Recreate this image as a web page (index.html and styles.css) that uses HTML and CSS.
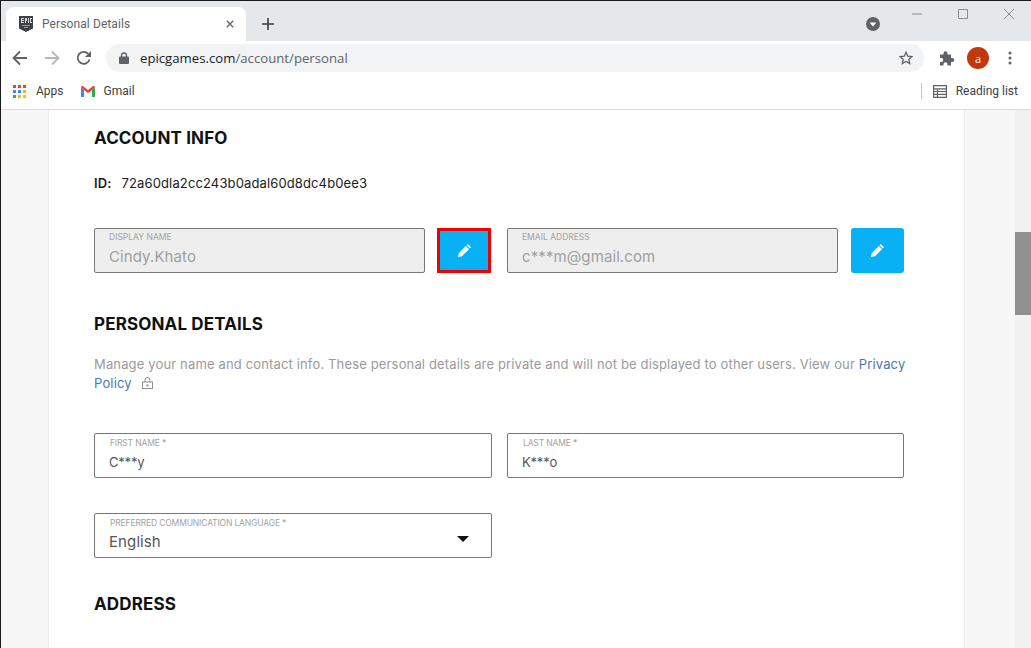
FILE: index.html
```html
<!DOCTYPE html>
<html lang="en">
<head>
<meta charset="utf-8">
<title>Personal Details</title>
<link rel="stylesheet" href="styles.css">
</head>
<body>
<div class="window">
  <div class="tabstrip">
    <div class="tab">
      <svg class="favicon" viewBox="0 0 14 16"><path d="M0 0h14v12.500L7 16 0 12.500z" fill="#3c4043"/><path d="M2 2h3v1H3v1h2v1H3v1h2v1H2zM6 2h2v3H7v2H6zM9 2h1v5H9zM11 2h2v1h-1v3h1v1h-2z" fill="#d8d8d8"/><path d="M3 9h8v1H3zM5 11h4v1H5z" fill="#9a9a9a"/></svg>
      <span class="tab-title">Personal Details</span>
      <svg class="tab-close" viewBox="0 0 10 10"><path d="M1 1l8 8M9 1l-8 8" stroke="#5f6368" stroke-width="1.600"/></svg>
    </div>
    <svg class="new-tab" viewBox="0 0 12 12"><path d="M6 0v12M0 6h12" stroke="#3c4043" stroke-width="1.600"/></svg>
    <div class="strip-spacer"></div>
    <svg class="tab-search" viewBox="0 0 14 14"><circle cx="7" cy="7" r="7" fill="#5f6368"/><path d="M3.600 5.400h6.800L7 9.400z" fill="#fff"/></svg>
    <div class="win-controls">
      <svg viewBox="0 0 10 10"><path d="M0 5h10" stroke="#8a8d91"/></svg>
      <svg viewBox="0 0 10 10"><path d="M.5.5h9v9h-9z" fill="none" stroke="#8a8d91"/></svg>
      <svg viewBox="0 0 10 10"><path d="M0 0l10 10M10 0L0 10" stroke="#8a8d91"/></svg>
    </div>
  </div>
  <div class="toolbar">
    <svg class="nav" viewBox="0 0 16 16"><path d="M15 8H2M8 1.500L1.500 8 8 14.500" fill="none" stroke="#5f6368" stroke-width="1.800"/></svg>
    <svg class="nav" viewBox="0 0 16 16"><path d="M1 8h13M8 1.500L14.500 8 8 14.500" fill="none" stroke="#b6b8bb" stroke-width="1.800"/></svg>
    <svg class="nav" viewBox="0 0 16 16"><path d="M13.500 9.500A6 6 0 1 1 12.200 3.800" fill="none" stroke="#5f6368" stroke-width="1.800"/><path d="M15 1v6H9z" fill="#5f6368"/></svg>
    <div class="omnibox">
      <svg class="lock" viewBox="0 0 10 12"><path d="M2.500 5V3.500a2.500 2.500 0 0 1 5 0V5" fill="none" stroke="#5f6368" stroke-width="1.300"/><rect y="4.500" width="10" height="7.500" rx="1" fill="#5f6368"/></svg>
      <span class="url"><span class="host">epicgames.com</span>/account/personal</span>
      <svg class="star" viewBox="0 0 16 16"><path d="M8 1.500l2 4.400 4.700.5-3.500 3.200 1 4.700L8 11.900l-4.200 2.400 1-4.700L1.300 6.400 6 5.900z" fill="none" stroke="#5f6368" stroke-width="1.500"/></svg>
    </div>
    <svg class="ext" viewBox="0 0 16 16"><path d="M1 4.500h3.500V3.300a2 2 0 1 1 4 0v1.200H12V8h1.200a2 2 0 1 1 0 4H12v3.500H8.500v-1.200a2 2 0 1 0-4 0v1.200H1V12h1.200a2 2 0 1 0 0-4H1z" fill="#5f6368"/></svg>
    <div class="avatar">a</div>
    <svg class="kebab" viewBox="0 0 4 14"><circle cx="2" cy="2" r="1.500" fill="#5f6368"/><circle cx="2" cy="7" r="1.500" fill="#5f6368"/><circle cx="2" cy="12" r="1.500" fill="#5f6368"/></svg>
  </div>
  <div class="bookmarks">
    <svg class="apps" viewBox="0 0 14 14">
      <rect width="3" height="3" fill="#ea4335"/><rect x="5" width="3" height="3" fill="#ea4335"/><rect x="10" width="3" height="3" fill="#ea4335"/>
      <rect y="5" width="3" height="3" fill="#4285f4"/><rect x="5" y="5" width="3" height="3" fill="#4285f4"/><rect x="10" y="5" width="3" height="3" fill="#fbbc04"/>
      <rect y="10" width="3" height="3" fill="#34a853"/><rect x="5" y="10" width="3" height="3" fill="#fbbc04"/><rect x="10" y="10" width="3" height="3" fill="#fbbc04"/>
    </svg>
    <span class="bm-label bm-apps">Apps</span>
    <svg class="gmail" viewBox="0 0 14 11">
      <path d="M0 1.500V11h3V4z" fill="#4285f4"/><path d="M14 1.500V11h-3V4z" fill="#34a853"/>
      <path d="M0 1.500C0 0 1.500-.400 2.500.400L7 4l4.500-3.600C12.500-.400 14 0 14 1.500L11 4 7 7 3 4z" fill="#ea4335"/>
    </svg>
    <span class="bm-label">Gmail</span>
    <div class="strip-spacer"></div>
    <div class="bm-sep"></div>
    <svg class="reading" viewBox="0 0 14 13"><path d="M.6.600h12.800v11.800H.6zM.6 3.800h12.800M.6 6.500h12.800M.6 9.300h12.800M4.500 3.800v8.600" fill="none" stroke="#5f6368" stroke-width="1.200"/></svg>
    <span class="bm-label bm-reading">Reading list</span>
  </div>
  <div class="viewport">
    <div class="gutter"></div>
    <main class="card">
      <h2 class="heading heading-account">ACCOUNT INFO</h2>
      <p class="id-line"><strong>ID:</strong><span>72a60dla2cc243b0adal60d8dc4b0ee3</span></p>
      <div class="row row-account">
        <div class="field-with-btn">
          <div class="field field-disabled"><span class="field-label">DISPLAY NAME</span><span class="field-value">Cindy.Khato</span></div>
          <button class="edit edit-active" aria-label="Edit display name"><svg viewBox="0 0 16 16"><path d="M11.600 1l3.400 3.400-1.500 1.500-3.400-3.400zM9.400 3.200l3.400 3.400L5.200 14.200 1 15l.8-4.200z" fill="#fff"/></svg></button>
        </div>
        <div class="field-with-btn">
          <div class="field field-disabled"><span class="field-label">EMAIL ADDRESS</span><span class="field-value">c***m@gmail.com</span></div>
          <button class="edit" aria-label="Edit email"><svg viewBox="0 0 16 16"><path d="M11.600 1l3.400 3.400-1.500 1.500-3.400-3.400zM9.400 3.200l3.400 3.400L5.200 14.200 1 15l.8-4.200z" fill="#fff"/></svg></button>
        </div>
      </div>
      <h2 class="heading heading-personal">PERSONAL DETAILS</h2>
      <p class="desc">Manage your name and contact info. These personal details are private and will not be displayed to other users. View our <a href="#">Privacy Policy</a><svg class="desc-lock" viewBox="0 0 11 12"><path d="M3 5V3a2.500 2.500 0 0 1 5 0v2" fill="none" stroke="#8e8e8e"/><rect x=".5" y="5" width="10" height="6.500" fill="none" stroke="#8e8e8e"/><rect x="4.500" y="7.500" width="2" height="2" fill="#8e8e8e"/></svg></p>
      <div class="row row-names">
        <div class="field"><span class="field-label">FIRST NAME *</span><span class="field-value field-small">C***y</span></div>
        <div class="field"><span class="field-label">LAST NAME *</span><span class="field-value field-small">K***o</span></div>
      </div>
      <div class="row row-lang">
        <div class="field field-select">
          <div class="select-text"><span class="field-label">PREFERRED COMMUNICATION LANGUAGE *</span><span class="field-value">English</span></div>
          <span class="caret"></span>
        </div>
      </div>
      <h2 class="heading heading-address">ADDRESS</h2>
    </main>
    <div class="gutter gutter-right"></div>
    <div class="scrollbar"><div class="thumb"></div></div>
  </div>
</div>
</body>
</html>
```
FILE: styles.css
```css
* { box-sizing: border-box; }
html, body { margin: 0; height: 100%; overflow: hidden; }
body { font-family: "Inter", "Liberation Sans", sans-serif; background: #fff; }
.window { width: 1031px; height: 648px; display: flex; flex-direction: column; border-top: 1px solid #1a1a1a; border-left: 1px solid #1a1a1a; }
.tabstrip { height: 40px; background: #e5e8eb; display: flex; align-items: flex-start; padding-left: 5px; flex: none; }
.tab { width: 240px; height: 34px; margin-top: 6px; background: #fff; border-radius: 8px 8px 0 0; display: flex; align-items: center; padding-left: 13px; }
.favicon { width: 14px; height: 16px; margin-right: 9px; }
.tab-title { font-size: 12px; color: #5f6368; letter-spacing: .1px; flex: 1; font-family: "Roboto", sans-serif; }
.tab-close { width: 8px; height: 8px; margin-right: 12px; }
.new-tab { width: 12px; height: 12px; margin: 17px 0 0 16px; }
.strip-spacer { flex: 1; }
.tab-search { width: 14px; height: 14px; margin: 16px 32px 0 0; }
.win-controls { display: flex; gap: 36px; margin: 8px 17px 0 0; width: 102px; flex: none; }
.win-controls svg { width: 10px; height: 10px; flex: none; }
.toolbar { height: 34px; background: #fff; display: flex; align-items: center; padding-left: 11px; flex: none; }
.nav { width: 16px; height: 16px; margin-right: 16px; }
.omnibox { width: 818px; height: 28px; margin-left: -2px; border-radius: 14px; background: #f1f3f4; display: flex; align-items: center; padding-left: 13px; padding-right: 11px; }
.lock { width: 10px; height: 12px; margin-right: 11px; }
.url { flex: 1; font-family: "Open Sans", sans-serif; font-size: 13.200px; color: #5f6368; }
.host { color: #202124; }
.star { width: 14px; height: 14px; }
.ext { width: 16px; height: 16px; margin-left: 15px; }
.avatar { width: 22px; height: 22px; border-radius: 50%; background: #c1380c; color: #fff; font-size: 11px; margin-left: 12px; display: flex; align-items: center; justify-content: center; font-family: "Open Sans", sans-serif; }
.kebab { width: 4px; height: 14px; margin-left: 19px; }
.bookmarks { height: 35px; background: #fff; border-bottom: 1px solid #dadce0; display: flex; align-items: center; padding-left: 12px; flex: none; }
.apps { width: 14px; height: 14px; margin-right: 9px; }
.bm-label { font-family: "Roboto", sans-serif; font-size: 12px; color: #3c4043; margin-top: -3px; }
.bm-apps { margin-right: 17px; }
.gmail { width: 14px; height: 11px; margin-right: 9px; margin-top: -2px; }
.bm-sep { width: 1px; height: 16px; background: #c6c8cc; margin-right: 11px; margin-top: -2px; }
.reading { width: 14px; height: 13px; margin-right: 9px; margin-top: -2px; }
.bm-reading { margin-right: 13px; }
.viewport { flex: 1; display: flex; min-height: 0; overflow: hidden; }
.gutter { width: 48px; background: #f7f7f7; border-right: 1px solid #eee; flex: none; }
.gutter-right { width: 51px; border-right: 0; border-left: 1px solid #eee; }
.card { flex: 1; background: #fff; padding: 0 60px 0 45px; min-width: 0; }
.heading { margin: 0; font-weight: 700; font-size: 17px; line-height: 22px; letter-spacing: .15px; color: #111; }
.heading-account { margin-top: 17px; }
.id-line { margin: 24px 0 0; font-size: 13px; line-height: 20px; letter-spacing: .13px; color: #202020; display: flex; gap: 10px; }
.id-line strong { font-weight: 600; }
.row { display: grid; grid-template-columns: 398px 397px; gap: 15px; }
.row-account { margin-top: 35px; }
.field-with-btn { display: flex; gap: 13px; }
.field { height: 45px; flex: 1; border: 1px solid #777; border-radius: 2px; padding: 1px 14px 0; display: flex; flex-direction: column; background: #fff; }
.field-disabled { background: #eee; }
.field-label { font-size: 8.500px; line-height: 15px; color: #a3a3a3; }
.field-value { font-size: 15px; line-height: 24px; letter-spacing: .1px; color: #555; }
.field-disabled .field-value { color: #a0a0a0; }
.field-small { font-size: 13px; letter-spacing: -.2px; }
.row-names .field-label, .select-text .field-label { margin: 1px 0 0 1px; line-height: 14px; letter-spacing: -.15px; }
.edit { width: 53px; height: 45px; padding: 0; border: 0; border-radius: 3px; background: #07b1f3; display: flex; align-items: center; justify-content: center; flex: none; }
.edit svg { width: 15px; height: 15px; }
.edit-active { outline: 3px solid #f00000; outline-offset: -3px; border-radius: 0; margin: 0 1px 0 -1px; width: 54px; }
.heading-personal { margin-top: 40px; }
.desc { margin: 20px -10px 0 0; font-size: 13px; line-height: 19px; letter-spacing: .15px; color: #9a9a9a; }
.desc a { color: #4a78b0; text-decoration: none; }
.desc-lock { width: 11px; height: 12px; margin-left: 10px; vertical-align: -1px; }
.row-names { margin-top: 40px; }
.row-lang { margin-top: 35px; }
.field-select { flex-direction: row; align-items: center; padding-right: 22px; padding-top: 0; }
.select-text { flex: 1; display: flex; flex-direction: column; padding-top: 1px; align-self: flex-start; }
.caret { width: 0; height: 0; border-left: 6px solid transparent; border-right: 6px solid transparent; border-top: 6px solid #111; margin-top: 6px; }
.heading-address { margin-top: 35px; }
.scrollbar { width: 16px; background: #f1f1f1; flex: none; padding-top: 122px; }
.thumb { height: 83px; background: #909090; }
```
